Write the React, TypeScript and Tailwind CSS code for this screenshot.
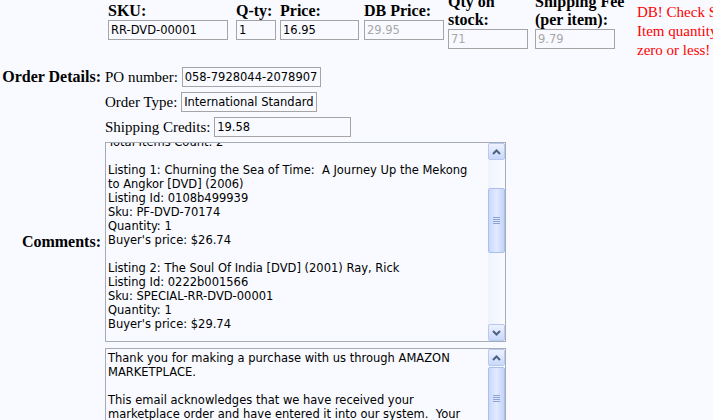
import React from "react";

const inputCls =
    "h-[20px] border border-[#a5a5a5] bg-[#f8faff] px-[2px] text-[11.5px] font-['DejaVu_Sans',Verdana,sans-serif] outline-none";

function TextBox(props: { value: string; width: string; disabled?: boolean }) {
    const { value, width, disabled = false } = props;
    return (
        <input
            readOnly
            disabled={disabled}
            value={value}
            className={`${inputCls} ${width} ${disabled ? "text-[#a8a8a8]" : "text-black"}`}
        />
    );
}

// top row cell: label sits over the input
function Cell(props: { width: string; label: React.ReactNode; children: React.ReactNode }) {
    return (
        <div className={`${props.width} shrink-0 flex flex-col items-start`}>
            <div className="font-bold leading-[18px]">{props.label}</div>
            {props.children}
        </div>
    );
}

function Chevron({ up }: { up: boolean }) {
    return (
        <svg width="9" height="6" viewBox="0 0 9 6">
            <path
                d={up ? "M1 5 L4.5 1.5 L8 5" : "M1 1 L4.5 4.5 L8 1"}
                fill="none"
                stroke="#4d6185"
                strokeWidth="2"
            />
        </svg>
    );
}

function ScrollButton({ up }: { up: boolean }) {
    return (
        <div className="h-[17px] shrink-0 rounded-[2px] border border-[#b7c9f2] bg-gradient-to-b from-[#edf2fe] to-[#c9d8fa] flex items-center justify-center">
            <Chevron up={up} />
        </div>
    );
}

function Scrollbar(props: { thumbTop: string; thumbHeight: string }) {
    return (
        <div className="w-[17px] shrink-0 flex flex-col bg-gradient-to-r from-[#eef3fd] to-[#fafbfe]">
            <ScrollButton up />
            <div className="flex-1 overflow-hidden">
                <div
                    className={`${props.thumbTop} ${props.thumbHeight} rounded-[2px] border border-[#a9bff0] bg-gradient-to-r from-[#c8d7fb] via-[#e2eafd] to-[#c4d4f9] flex flex-col items-center justify-center gap-[1px]`}
                >
                    <div className="w-[7px] h-[1px] bg-[#8aa2d8]" />
                    <div className="w-[7px] h-[1px] bg-[#8aa2d8]" />
                    <div className="w-[7px] h-[1px] bg-[#8aa2d8]" />
                    <div className="w-[7px] h-[1px] bg-[#8aa2d8]" />
                </div>
            </div>
            <ScrollButton up={false} />
        </div>
    );
}

function MemoBox(props: { lines: string[]; offset: string; thumbTop: string; thumbHeight: string }) {
    return (
        <div className="w-[401px] h-[200px] shrink-0 border border-[#a5acb5] bg-[#f8faff] flex">
            <div className="flex-1 overflow-hidden px-[2px] pt-[2px]">
                <div
                    className={`${props.offset} text-[11.5px] leading-[14px] font-['DejaVu_Sans',Verdana,sans-serif] text-black whitespace-pre`}
                >
                    {props.lines.map((line, i) => (
                        <div key={i} className="h-[14px]">
                            {line}
                        </div>
                    ))}
                </div>
            </div>
            <Scrollbar thumbTop={props.thumbTop} thumbHeight={props.thumbHeight} />
        </div>
    );
}

const comments = [
    "Total Items Count: 2",
    "",
    "Listing 1: Churning the Sea of Time:  A Journey Up the Mekong",
    "to Angkor [DVD] (2006)",
    "Listing Id: 0108b499939",
    "Sku: PF-DVD-70174",
    "Quantity: 1",
    "Buyer's price: $26.74",
    "",
    "Listing 2: The Soul Of India [DVD] (2001) Ray, Rick",
    "Listing Id: 0222b001566",
    "Sku: SPECIAL-RR-DVD-00001",
    "Quantity: 1",
    "Buyer's price: $29.74",
    "",
];

const message = [
    "Thank you for making a purchase with us through AMAZON",
    "MARKETPLACE.",
    "",
    "This email acknowledges that we have received your",
    "marketplace order and have entered it into our system.  Your",
    "order will be processed and shipped as soon as possible.",
];

function Row(props: { label?: string; className?: string; children: React.ReactNode }) {
    return (
        <div className={`flex items-center ${props.className ?? ""}`}>
            <div className="w-[101px] shrink-0 text-right font-bold">{props.label}</div>
            <div className="ml-[4px] flex items-center whitespace-nowrap text-[15px]">{props.children}</div>
        </div>
    );
}

export default function App() {
    return (
        <div className="h-screen overflow-hidden bg-[#f8faff] text-black text-[16px] font-['Liberation_Serif','Times_New_Roman',serif]">
            {/* item line */}
            <div className="h-[42px] flex items-center pl-[108px]">
                <Cell width="w-[128px]" label="SKU:">
                    <TextBox value="RR-DVD-00001" width="w-[120px]" />
                </Cell>
                <Cell width="w-[44px]" label="Q-ty:">
                    <TextBox value="1" width="w-[40px]" />
                </Cell>
                <Cell width="w-[84px]" label="Price:">
                    <TextBox value="16.95" width="w-[79px]" />
                </Cell>
                <Cell width="w-[84px]" label="DB Price:">
                    <TextBox value="29.95" width="w-[80px]" disabled />
                </Cell>
                <Cell width="w-[87px]" label={<>Qty on<br />stock:</>}>
                    <TextBox value="71" width="w-[80px]" disabled />
                </Cell>
                <Cell width="w-[102px]" label={<>Shipping Fee<br />(per item):</>}>
                    <TextBox value="9.79" width="w-[80px]" disabled />
                </Cell>
                <div className="pt-[21px] shrink-0 text-[#ff0000] text-[15px] leading-[19px] whitespace-nowrap">
                    DB! Check SKU
                    <br />
                    Item quantity is
                    <br />
                    zero or less!
                </div>
            </div>

            {/* order details */}
            <div className="mt-[25px] flex flex-col">
                <Row label="Order Details:" className="h-[20px]">
                    <span>PO number:&nbsp;</span>
                    <TextBox value="058-7928044-2078907" width="w-[139px]" />
                </Row>
                <Row className="h-[20px] mt-[5px]">
                    <span>Order Type:&nbsp;</span>
                    <TextBox value="International Standard" width="w-[136px]" />
                </Row>
                <Row className="h-[20px] mt-[5px]">
                    <span>Shipping Credits:&nbsp;</span>
                    <TextBox value="19.58" width="w-[137px]" />
                </Row>
                <Row label="Comments:" className="h-[200px] mt-[5px]">
                    <MemoBox lines={comments} offset="-mt-[10px]" thumbTop="mt-[28px]" thumbHeight="h-[65px]" />
                </Row>
                <Row className="h-[200px] mt-[6px]">
                    <MemoBox lines={message} offset="mt-0" thumbTop="mt-[1px]" thumbHeight="h-[62px]" />
                </Row>
            </div>
        </div>
    );
}
